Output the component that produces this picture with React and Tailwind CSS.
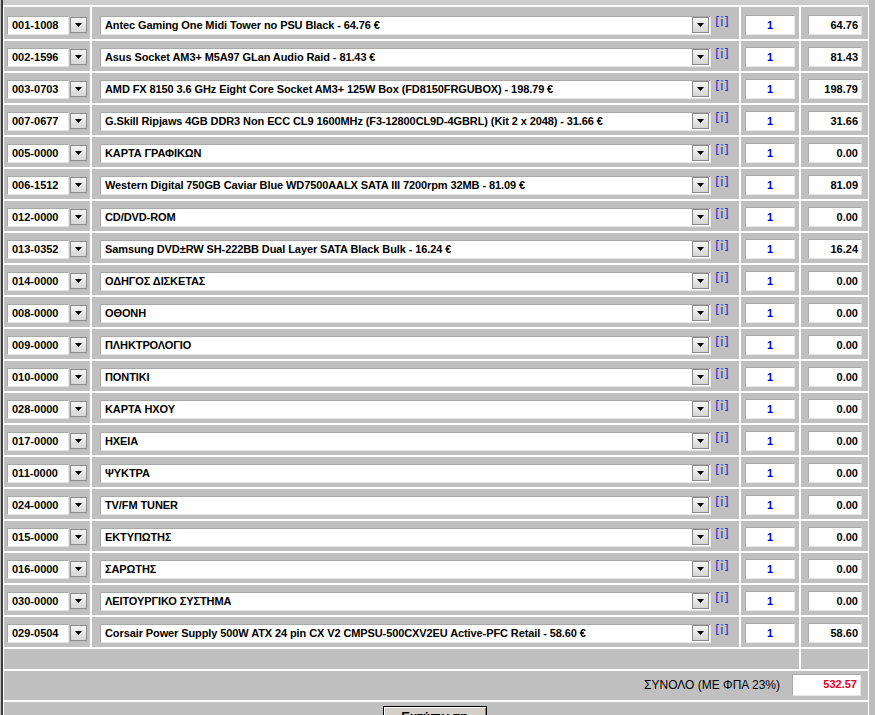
import React from 'react';

const rows = [
  ['001-1008', 'Antec Gaming One Midi Tower no PSU Black - 64.76 €', '64.76'],
  ['002-1596', 'Asus Socket AM3+ M5A97 GLan Audio Raid - 81.43 €', '81.43'],
  ['003-0703', 'AMD FX 8150 3.6 GHz Eight Core Socket AM3+ 125W Box (FD8150FRGUBOX) - 198.79 €', '198.79'],
  ['007-0677', 'G.Skill Ripjaws 4GB DDR3 Non ECC CL9 1600MHz (F3-12800CL9D-4GBRL) (Kit 2 x 2048) - 31.66 €', '31.66'],
  ['005-0000', 'ΚΑΡΤΑ ΓΡΑΦΙΚΩΝ', '0.00'],
  ['006-1512', 'Western Digital 750GB Caviar Blue WD7500AALX SATA III 7200rpm 32MB - 81.09 €', '81.09'],
  ['012-0000', 'CD/DVD-ROM', '0.00'],
  ['013-0352', 'Samsung DVD±RW SH-222BB Dual Layer SATA Black Bulk - 16.24 €', '16.24'],
  ['014-0000', 'ΟΔΗΓΟΣ ΔΙΣΚΕΤΑΣ', '0.00'],
  ['008-0000', 'ΟΘΟΝΗ', '0.00'],
  ['009-0000', 'ΠΛΗΚΤΡΟΛΟΓΙΟ', '0.00'],
  ['010-0000', 'ΠΟΝΤΙΚΙ', '0.00'],
  ['028-0000', 'ΚΑΡΤΑ ΗΧΟΥ', '0.00'],
  ['017-0000', 'ΗΧΕΙΑ', '0.00'],
  ['011-0000', 'ΨΥΚΤΡΑ', '0.00'],
  ['024-0000', 'TV/FM TUNER', '0.00'],
  ['015-0000', 'ΕΚΤΥΠΩΤΗΣ', '0.00'],
  ['016-0000', 'ΣΑΡΩΤΗΣ', '0.00'],
  ['030-0000', 'ΛΕΙΤΟΥΡΓΙΚΟ ΣΥΣΤΗΜΑ', '0.00'],
  ['029-0504', 'Corsair Power Supply 500W ATX 24 pin CX V2 CMPSU-500CXV2EU Active-PFC Retail - 58.60 €', '58.60'],
];

// little combo arrow button, old windows look
function ArrowBtn({ className = '' }) {
  return (
    <div className={`flex items-center justify-center border border-[#8a8a8a] bg-gradient-to-b from-[#f6f6f6] to-[#d6d6d6] ${className}`}>
      <svg width="7" height="4" viewBox="0 0 7 4">
        <polygon points="0,0 7,0 3.5,4" fill="#000" />
      </svg>
    </div>
  );
}

const box = 'bg-white border border-[#a8a8a8] border-r-[#e6e6e6] border-b-[#e6e6e6]';

function Row({ code, desc, price, first }) {
  const h = first ? 'h-[32px] pt-[4px]' : 'h-[30px] pt-[2px]';
  return (
    <>
      <div className={`bg-[#c0c0c0] flex items-center ${h}`}>
        <div className={`${box} ml-[3px] w-[62px] h-[19px] flex items-center pl-[4px] text-[11px] font-bold text-black`}>
          {code}
        </div>
        <ArrowBtn className="ml-[1px] w-[17px] h-[16px]" />
      </div>
      <div className={`bg-[#c0c0c0] flex items-center ${h}`}>
        <div className={`${box} ml-[8px] w-[611px] h-[19px] flex items-center justify-between pl-[4px] pr-[1px]`}>
          <span className="text-[11px] font-bold tracking-[-0.1px] text-black whitespace-nowrap overflow-hidden">{desc}</span>
          <ArrowBtn className="w-[17px] h-[16px] shrink-0" />
        </div>
        <span className="ml-[4px] self-start mt-[3px] text-[13px] leading-[15px] text-[#3333cc] font-['DejaVu_Sans',sans-serif]">[i]</span>
      </div>
      <div className={`bg-[#c0c0c0] flex items-center ${h}`}>
        <div className={`${box} ml-[4px] w-[50px] h-[20px] flex items-center justify-center text-[11px] font-bold text-[#0000cc]`}>
          1
        </div>
      </div>
      <div className={`bg-[#c0c0c0] flex items-center ${h}`}>
        <div className={`${box} ml-[7px] w-[54px] h-[20px] flex items-center justify-end pr-[3px] text-[11px] font-bold text-black`}>
          {price}
        </div>
      </div>
    </>
  );
}

export default function App() {
  return (
    <div className="w-[875px] h-[715px] overflow-hidden bg-[#c0c0c0] flex font-['Liberation_Sans',Arial,sans-serif]">
      <div className="w-[1px] shrink-0 bg-[#c0c0c0]" />
      <div className="w-[2px] shrink-0 bg-[#3c3c3c]" />
      <div className="flex flex-col shrink-0">
        <div className="h-[5px] shrink-0 bg-[#cdcdcd]" />
        <div className="bg-white pt-[2px] px-[1px] shrink-0">
          <div className="grid grid-cols-[86px_647px_58px_67px] gap-[2px]">
            {rows.map((r, i) => (
              <Row key={r[0]} code={r[0]} desc={r[1]} price={r[2]} first={i === 0} />
            ))}
            <div className="col-span-3 h-[20px] bg-[#c0c0c0]" />
            <div className="h-[20px] bg-[#c0c0c0]" />
            <div className="col-span-4 h-[29px] bg-[#c0c0c0] flex items-center justify-end pr-[7px] pb-[2px]">
              <span className="text-[12px] text-black mr-[12px]">ΣΥΝΟΛΟ (ΜΕ ΦΠΑ 23%)</span>
              <div className={`${box} w-[69px] h-[22px] flex items-center justify-end pr-[3px] text-[11px] font-bold text-[#e0001b]`}>
                532.57
              </div>
            </div>
            <div className="col-span-4 h-[30px] bg-[#c0c0c0] flex justify-center pt-[4px]">
              <button className="ml-[-3px] w-[104px] h-[22px] border border-black bg-[#d4d0c8] shadow-[inset_1px_1px_0_#fff,inset_-1px_-1px_0_#808080] text-[13px] leading-[16px] font-bold text-black flex justify-center pt-[2px]">
                Εκτύπωση
              </button>
            </div>
          </div>
        </div>
      </div>
      <div className="flex-1 bg-[#bcbcbc]" />
    </div>
  );
}
